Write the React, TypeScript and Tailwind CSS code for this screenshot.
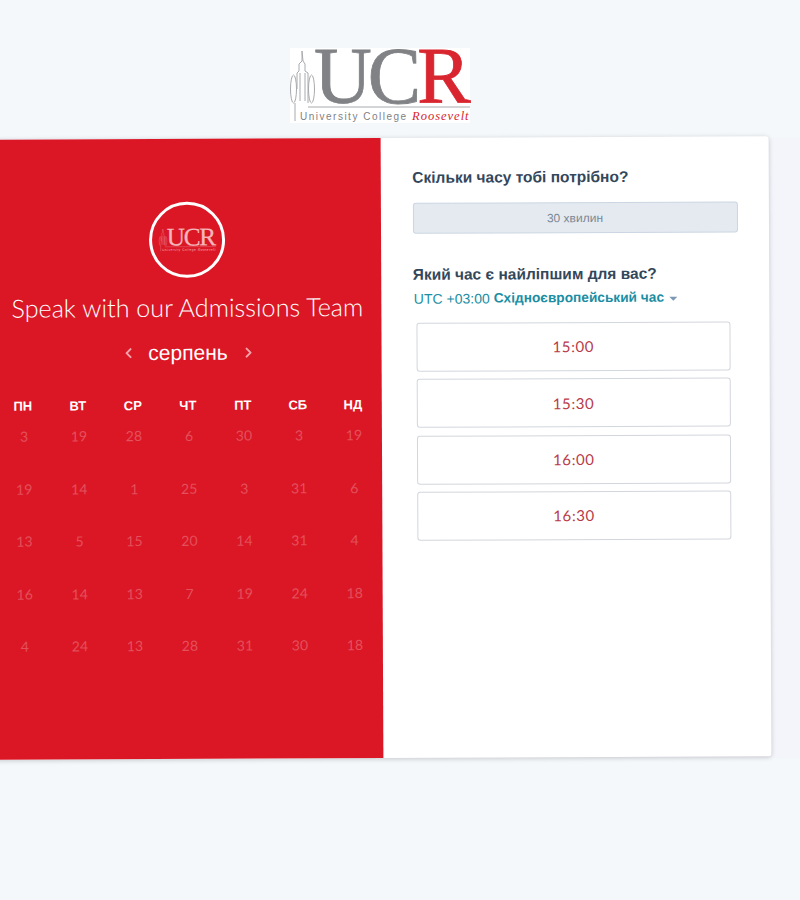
import { ChevronLeft, ChevronRight } from 'lucide-react';

const days = ['ПН', 'ВТ', 'СР', 'ЧТ', 'ПТ', 'СБ', 'НД'];
const dates = [
  3, 19, 28, 6, 30, 3, 19,
  19, 14, 1, 25, 3, 31, 6,
  13, 5, 15, 20, 14, 31, 4,
  16, 14, 13, 7, 19, 24, 18,
  4, 24, 13, 28, 31, 30, 18,
];
const times = ['15:00', '15:30', '16:00', '16:30'];

const Logo = ({ gray, red, line, className }: { gray: string; red: string; line: string; className: string }) => (
  <svg viewBox="0 0 180 75" className={className}>
    <g fill="none" stroke={line} strokeWidth="1">
      <ellipse cx="3.5" cy="41" rx="3" ry="14" />
      <ellipse cx="21.5" cy="41" rx="3" ry="14" />
      <path d="M7 41V25l2-2v-7l3-3V3l1 10 2 3v7l3 2v30" />
      <path d="M10 25v28M15 25v28" />
      <path d="M5 55v18M18 59h162" />
    </g>
    <text x="24" y="55" fontFamily="'Liberation Serif', serif" fontSize="80" letterSpacing="-4" fill={gray} stroke={gray} strokeWidth="0.8">
      UC<tspan fill={red} stroke={red}>R</tspan>
    </text>
    <text x="10" y="72" fontFamily="'Liberation Sans', sans-serif" fontSize="10" letterSpacing="1.5" fill={gray}>
      University College
    </text>
    <text x="122" y="72" fontFamily="'Liberation Serif', serif" fontStyle="italic" fontSize="12.5" letterSpacing="1" fill={red}>
      Roosevelt
    </text>
  </svg>
);

export default function App() {
  return (
    <div className="min-h-[900px] overflow-hidden bg-[#f5f8fb] pt-[48px] font-['Liberation_Sans',sans-serif]">
      <div className="ml-[-10px] flex w-[780px] justify-center">
        <Logo gray="#808285" red="#d9252f" line="#a8aaad" className="h-[75px] w-[180px] overflow-visible bg-white" />
      </div>
      {/* faint band behind the card */}
      <div className="mt-[15px] w-[800px] bg-[#f3f5fb]">
        <div className="ml-[-10px] flex h-[620px] w-[780px] rotate-[-0.26deg] rounded-[3px] bg-white shadow-[0_1px_5px_rgba(0,0,0,0.2)]">
          <section className="flex w-[392px] flex-col items-center bg-[#db1726] pl-[4px] pt-[63px] text-white">
            <div className="flex h-[76px] w-[76px] items-center justify-center rounded-full border-[3px] border-white">
              <Logo gray="#f4b6bb" red="#f4b6bb" line="#ee9aa1" className="h-[24px] w-[57px] overflow-visible" />
            </div>
            <h1 className="mt-[12px] font-['Lato',sans-serif] text-[25.2px] leading-[34px] font-light whitespace-nowrap">
              Speak with our Admissions Team
            </h1>
            <div className="ml-[1px] mt-[14px] flex items-center gap-[8px]">
              <ChevronLeft className="h-[16px] w-[16px] text-[#f3a3a9]" strokeWidth={3} />
              <span className="w-[88px] text-center text-[21px] leading-[30px]">серпень</span>
              <ChevronRight className="h-[16px] w-[16px] text-[#f3a3a9]" strokeWidth={3} />
            </div>
            <div className="mt-[28px] grid w-[385px] grid-cols-7 text-center">
              {days.map((d) => (
                <div key={d} className="text-[13px] leading-[20px] font-bold">{d}</div>
              ))}
            </div>
            <div className="ml-[2px] mt-[1px] grid w-[385px] grid-cols-7 text-center font-['Lato',sans-serif] text-[14px] leading-[38px] text-white/25">
              {dates.map((n, i) => (
                <div key={i} className="h-[52.5px]">{n}</div>
              ))}
            </div>
          </section>
          <section className="flex-1 pl-[31.5px] pr-[20px] pt-[29px] text-[#33475b]">
            <h2 className="text-[15.5px] leading-[22px] font-bold">Скільки часу тобі потрібно?</h2>
            <div className="mt-[14px] flex h-[31px] w-[325px] items-center justify-center rounded-[3px] border border-[#cbd6e2] bg-[#e5eaf1] text-[12px] text-[#7a8794]">
              30 хвилин
            </div>
            <h2 className="mt-[30px] text-[15.5px] leading-[22px] font-bold">Який час є найліпшим для вас?</h2>
            <div className="mt-[1px] flex items-center pl-[1px] text-[14px] leading-[24px] text-[#1b8ea3]">
              <span>UTC +03:00</span>
              <span className="ml-[4px] text-[13.7px] font-bold">Східноєвропейський час</span>
              <span className="ml-[5px] mt-[1px] h-0 w-0 border-x-[4px] border-t-[4px] border-x-transparent border-t-[#7c98b6]" />
            </div>
            <div className="ml-[3.5px] mt-[12px] flex w-[313.5px] flex-col gap-[7.3px]">
              {times.map((t) => (
                <button
                  key={t}
                  className="h-[49px] rounded-[3px] border border-[#d2d6dd] bg-white font-['Lato',sans-serif] text-[15px] tracking-[0.6px] text-[#b83a48]"
                >
                  {t}
                </button>
              ))}
            </div>
          </section>
        </div>
      </div>
    </div>
  );
}
